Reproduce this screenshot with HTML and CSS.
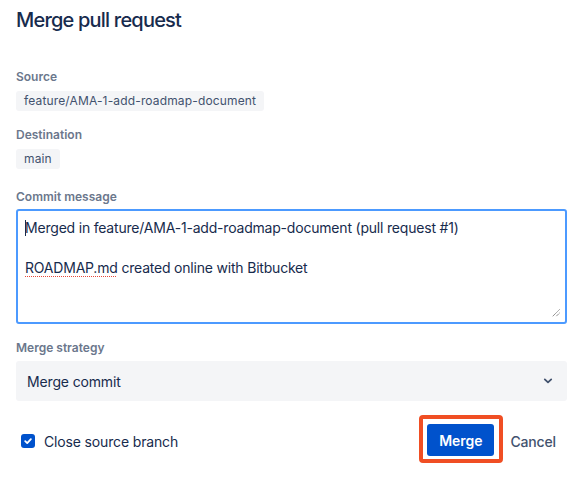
FILE: index.html
```html
<!DOCTYPE html>
<html>
<head>
<meta charset="utf-8">
<link rel="stylesheet" href="styles.css">
</head>
<body>
<div class="dialog">
  <h1 class="title">Merge pull request</h1>
  <div class="field first">
    <div class="label">Source</div>
    <span class="chip">feature/AMA-1-add-roadmap-document</span>
  </div>
  <div class="field">
    <div class="label">Destination</div>
    <span class="chip">main</span>
  </div>
  <div class="field msg">
    <div class="label">Commit message</div>
    <div class="textarea">
      <div class="line"><span class="caret"></span>Merged in feature/AMA-1-add-roadmap-document (pull request #1)</div>
      <div class="line gap"><span class="spell">ROADMAP.md</span> created online with Bitbucket</div>
      <svg class="grip" width="8" height="8" viewBox="0 0 8 8"><path d="M7.5 0.5 L0.5 7.5 M7.5 4 L4 7.5" stroke="#666" stroke-width="1" stroke-dasharray="1 0.6"/></svg>
    </div>
  </div>
  <div class="field strat">
    <div class="label">Merge strategy</div>
    <div class="select">
      <span>Merge commit</span>
      <svg width="10" height="8" viewBox="0 0 10 8"><path d="M1.8 2.4 L5 5.4 L8.2 2.4" fill="none" stroke="#42526E" stroke-width="1.8" stroke-linecap="round" stroke-linejoin="round"/></svg>
    </div>
  </div>
  <div class="footer">
    <label class="check">
      <span class="box"><svg width="12" height="12" viewBox="0 0 12 12"><path d="M3.2 6.2 L5.2 8.1 L8.9 4.1" fill="none" stroke="#fff" stroke-width="1.8" stroke-linecap="round" stroke-linejoin="round"/></svg></span>
      <span>Close source branch</span>
    </label>
    <div class="actions">
      <div class="highlight"><button class="primary">Merge</button></div>
      <button class="link">Cancel</button>
    </div>
  </div>
</div>
</body>
</html>
```
FILE: styles.css
```css
* { box-sizing: border-box; }
html, body { margin: 0; background: #fff; }
body {
  font-family: Inter, "Noto Sans", sans-serif;
  color: #172B4D;
}
.dialog {
  width: 583px;
  padding: 0 16px;
}
.title {
  margin: 0;
  padding-top: 8px;
  font-size: 20px;
  font-weight: 500;
  line-height: 24px;
  letter-spacing: -0.8px;
  color: #172B4D;
}
.field { display: flex; flex-direction: column; align-items: flex-start; }
.field.first { margin-top: 37px; }
.field + .field { margin-top: 16px; }
.label {
  font-size: 12px;
  font-weight: 600;
  color: #6B778C;
  line-height: 16px;
  margin-bottom: 6px;
}
.chip {
  display: inline-block;
  background: #F4F5F7;
  border-radius: 3px;
  font-size: 12px;
  line-height: 20px;
  letter-spacing: 0.15px;
  padding: 0 8px;
  color: #42526E;
}
.field.msg { margin-top: 20px; }
.field.msg .label { margin-bottom: 4px; }
.textarea {
  position: relative;
  width: 551px;
  height: 115px;
  border: 2px solid #4C9AFF;
  border-radius: 3px;
  padding: 7px 7px;
  font-size: 14px;
  line-height: 20px;
  letter-spacing: -0.2px;
  color: #172B4D;
}
.line { white-space: nowrap; }
.line.gap { margin-top: 20px; }
.caret {
  display: inline-block;
  width: 1px;
  height: 16px;
  background: #172B4D;
  vertical-align: -3px;
  margin-right: -1px;
}
.spell {
  text-decoration: underline dotted #E5493A;
  text-underline-offset: 3px;
  text-decoration-thickness: 1px;
}
.grip { position: absolute; right: 5px; bottom: 5px; }
.field.strat { margin-top: 16px; }
.field.strat .label { margin-bottom: 5px; }
.select {
  width: 551px;
  height: 40px;
  background: #F4F5F7;
  border-radius: 3px;
  display: flex;
  align-items: center;
  justify-content: space-between;
  padding: 0 14px 0 11px;
  font-size: 14px;
  letter-spacing: -0.15px;
  color: #172B4D;
}
.footer {
  margin-top: 14px;
  height: 52px;
  display: flex;
  align-items: center;
  justify-content: space-between;
}
.check {
  display: flex;
  align-items: center;
  gap: 9px;
  font-size: 14px;
  letter-spacing: -0.15px;
  color: #172B4D;
  padding-left: 5px;
}
.box {
  width: 14px;
  height: 14px;
  background: #0052CC;
  border-radius: 3px;
  display: flex;
  align-items: center;
  justify-content: center;
}
.actions { display: flex; align-items: center; gap: 7px; margin-right: 11px; }
.highlight {
  border: 4px solid #F04E23;
  border-radius: 4px;
  padding: 5px 5px 3px 4px;
  margin-bottom: 4px;
}
button {
  font-family: inherit;
  font-size: 14px;
  border: none;
  cursor: pointer;
}
.primary {
  display: block;
  background: #0052CC;
  color: #fff;
  font-weight: 600;
  width: 67px;
  height: 32px;
  border-radius: 3px;
  padding: 0;
}
.link {
  background: none;
  color: #42526E;
  padding: 0;
  font-weight: 500;
  letter-spacing: -0.15px;
}
```
